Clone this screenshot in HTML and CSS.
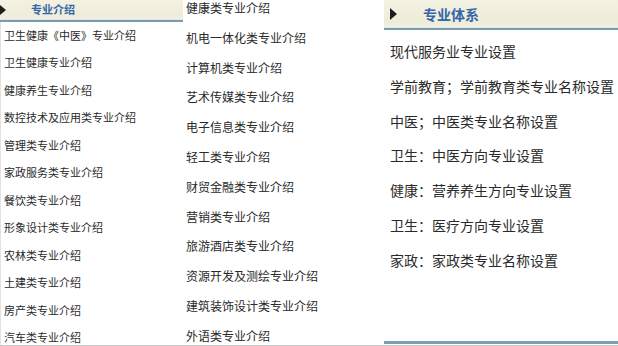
FILE: index.html
```html
<!DOCTYPE html>
<html lang="zh">
<head>
<meta charset="utf-8">
<link rel="stylesheet" href="styles.css">
</head>
<body>
<div class="page">
  <div class="col col-left">
    <div class="head head-left"><span class="arrow"></span><span class="head-title">专业介绍</span></div>
    <ul class="list list-left">
      <li>卫生健康《中医》专业介绍</li>
      <li>卫生健康专业介绍</li>
      <li>健康养生专业介绍</li>
      <li>数控技术及应用类专业介绍</li>
      <li>管理类专业介绍</li>
      <li>家政服务类专业介绍</li>
      <li>餐饮类专业介绍</li>
      <li>形象设计类专业介绍</li>
      <li>农林类专业介绍</li>
      <li>土建类专业介绍</li>
      <li>房产类专业介绍</li>
      <li>汽车类专业介绍</li>
    </ul>
  </div>
  <div class="col col-mid">
    <ul class="list list-mid">
      <li>健康类专业介绍</li>
      <li>机电一体化类专业介绍</li>
      <li>计算机类专业介绍</li>
      <li>艺术传媒类专业介绍</li>
      <li>电子信息类专业介绍</li>
      <li>轻工类专业介绍</li>
      <li>财贸金融类专业介绍</li>
      <li>营销类专业介绍</li>
      <li>旅游酒店类专业介绍</li>
      <li>资源开发及测绘专业介绍</li>
      <li>建筑装饰设计类专业介绍</li>
      <li>外语类专业介绍</li>
    </ul>
  </div>
  <div class="col col-right">
    <div class="head head-right"><span class="arrow arrow-r"></span><span class="head-title head-title-r">专业体系</span></div>
    <ul class="list list-right">
      <li>现代服务业专业设置</li>
      <li>学前教育；学前教育类专业名称设置</li>
      <li>中医；中医类专业名称设置</li>
      <li>卫生：中医方向专业设置</li>
      <li>健康：营养养生方向专业设置</li>
      <li>卫生：医疗方向专业设置</li>
      <li>家政：家政类专业名称设置</li>
    </ul>
  </div>
</div>
</body>
</html>
```

FILE: styles.css
```css
html, body {
  margin: 0;
  padding: 0;
  background: #fff;
}
body {
  font-family: "Noto Sans CJK SC", "Noto Sans", sans-serif;
  color: #2a2a2a;
}
.page {
  display: flex;
  width: 618px;
  height: 345px;
  overflow: hidden;
  border-bottom: 1px solid #c8c8c8;
}
.col {
  overflow: hidden;
}
.col-left {
  width: 183px;
  flex: none;
  box-shadow: inset 1px 0 0 #e2e2e2;
}
.col-mid {
  width: 201px;
  flex: none;
}
.col-right {
  flex: 1;
  display: flex;
  flex-direction: column;
  border-bottom: 3px solid #7f9faf;
  margin-bottom: 1px;
}
.head {
  display: flex;
  align-items: center;
  background: linear-gradient(#f3f1e2, #efecd9 80%, #f3f2e6);
  box-shadow: inset 0 -1px 0 #d6e8ee;
  border-bottom: 2px solid #7d9cab;
}
.head-left {
  height: 20px;
  align-items: flex-start;
}
.head-right {
  height: 28px;
}
.arrow {
  width: 0;
  height: 0;
  border-top: 5px solid transparent;
  border-bottom: 5px solid transparent;
  border-left: 6px solid #1e1e1e;
}
.head-left .arrow {
  margin-top: 5px;
}
.arrow-r {
  border-top-width: 6px;
  border-bottom-width: 6px;
  border-left-width: 7px;
  margin-left: 6px;
}
.head-title {
  margin-left: 25px;
  font-size: 11px;
  line-height: 18px;
  font-weight: bold;
  color: #3366aa;
}
.head-title-r {
  margin-left: 26px;
  font-size: 14px;
  line-height: 28px;
}
.list {
  list-style: none;
  margin: 0;
  padding: 0;
  white-space: nowrap;
}
.list-left {
  padding-left: 4px;
  font-size: 11px;
  line-height: 27.45px;
}
.list-mid {
  margin-top: -7px;
  padding-left: 3px;
  font-size: 12px;
  line-height: 29.8px;
}
.list-right {
  padding-top: 4px;
  padding-left: 6px;
  font-size: 14px;
  line-height: 34.8px;
}
```
